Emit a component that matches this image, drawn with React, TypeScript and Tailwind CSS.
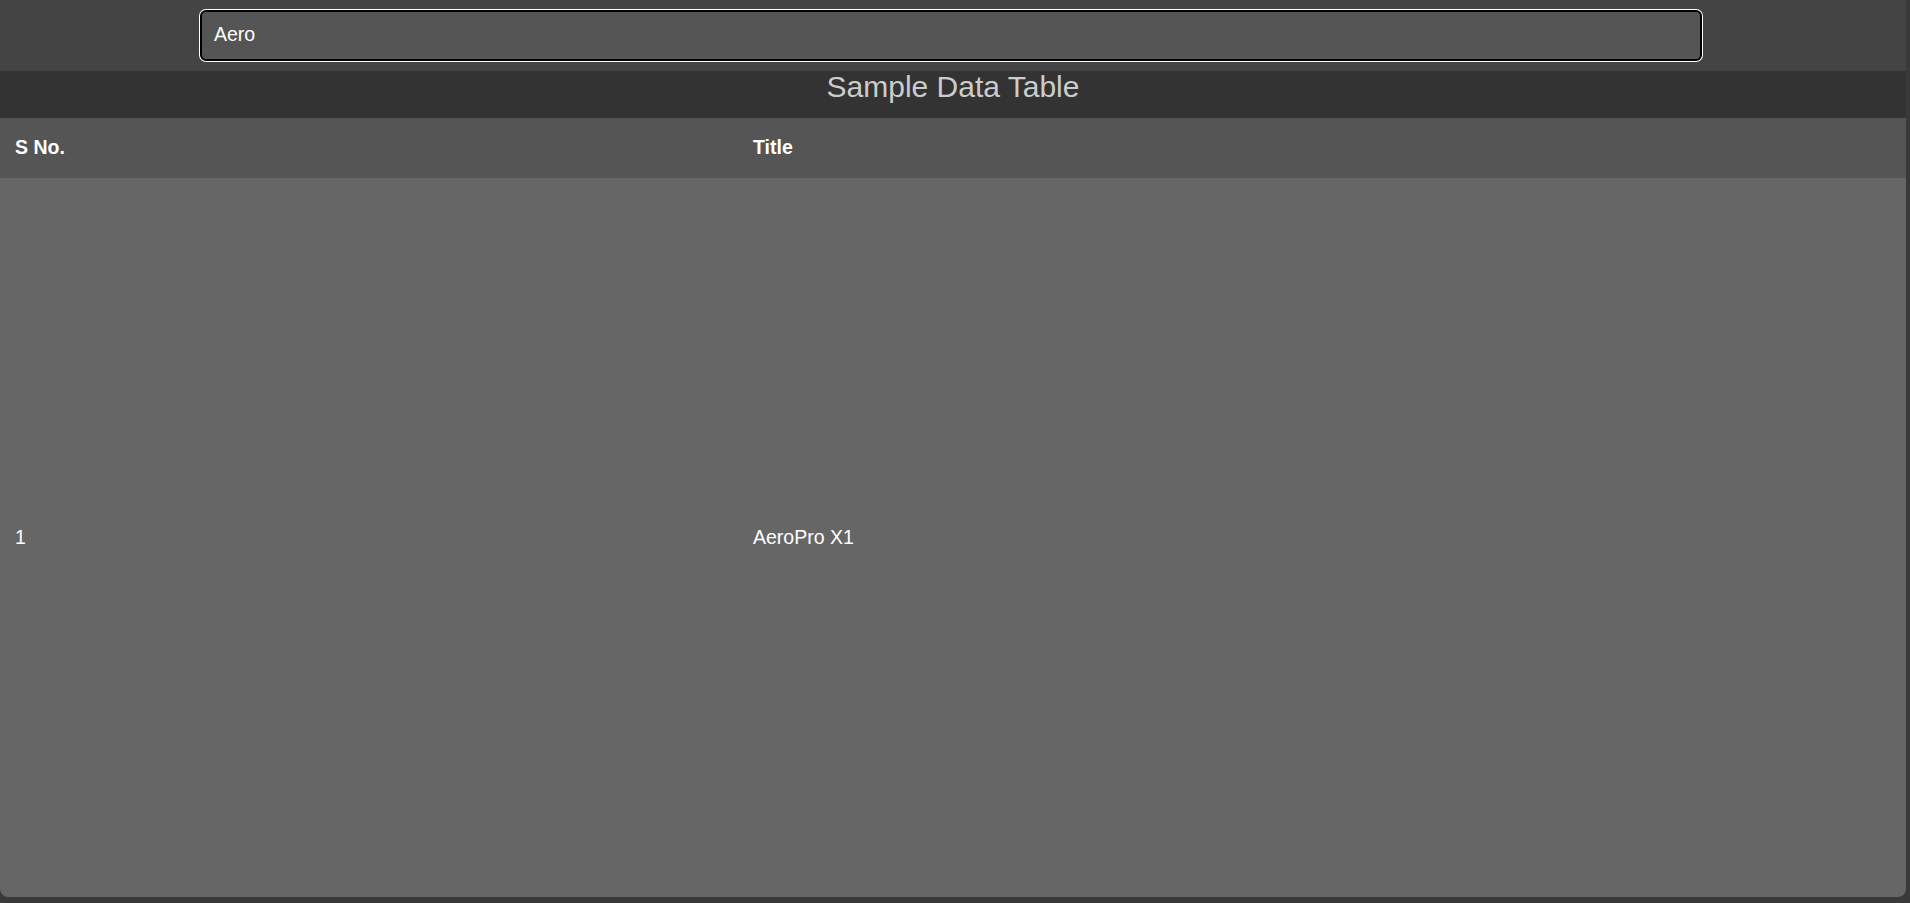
import React from "react";

export default function App() {
  return (
    <div
      className="w-full h-[903px] bg-[#393939] overflow-hidden"
      style={{ fontFamily: '"Liberation Sans", Arial, sans-serif' }}
    >
      <div className="w-[1906px] h-[897px] flex flex-col bg-[#666666] rounded-b-[8px] overflow-hidden">
        <div className="h-[71px] shrink-0 bg-[#444444] pl-[200px] pt-[10px]">
          <div className="w-[1502px] h-[51px] rounded-[6px] border-2 border-black bg-[#555555] shadow-[0_0_0_1px_#ffffff] flex items-center pl-[12px] pb-[1px] text-white text-[19.5px]">
            Aero
          </div>
        </div>
        <div className="h-[47px] shrink-0 bg-[#333333] flex items-start justify-center pt-[1px] text-[#cccccc] text-[30px] leading-none">
          Sample Data Table
        </div>
        <div className="h-[60px] shrink-0 bg-[#555555] grid grid-cols-[738px_1fr] items-center text-white font-bold text-[19.5px]">
          <div className="pl-[15px]">S No.</div>
          <div className="pl-[15px]">Title</div>
        </div>
        <div className="flex-1 grid grid-cols-[738px_1fr] items-center text-white text-[19.5px]">
          <div className="pl-[15px]">1</div>
          <div className="pl-[15px]">AeroPro X1</div>
        </div>
      </div>
    </div>
  );
}
